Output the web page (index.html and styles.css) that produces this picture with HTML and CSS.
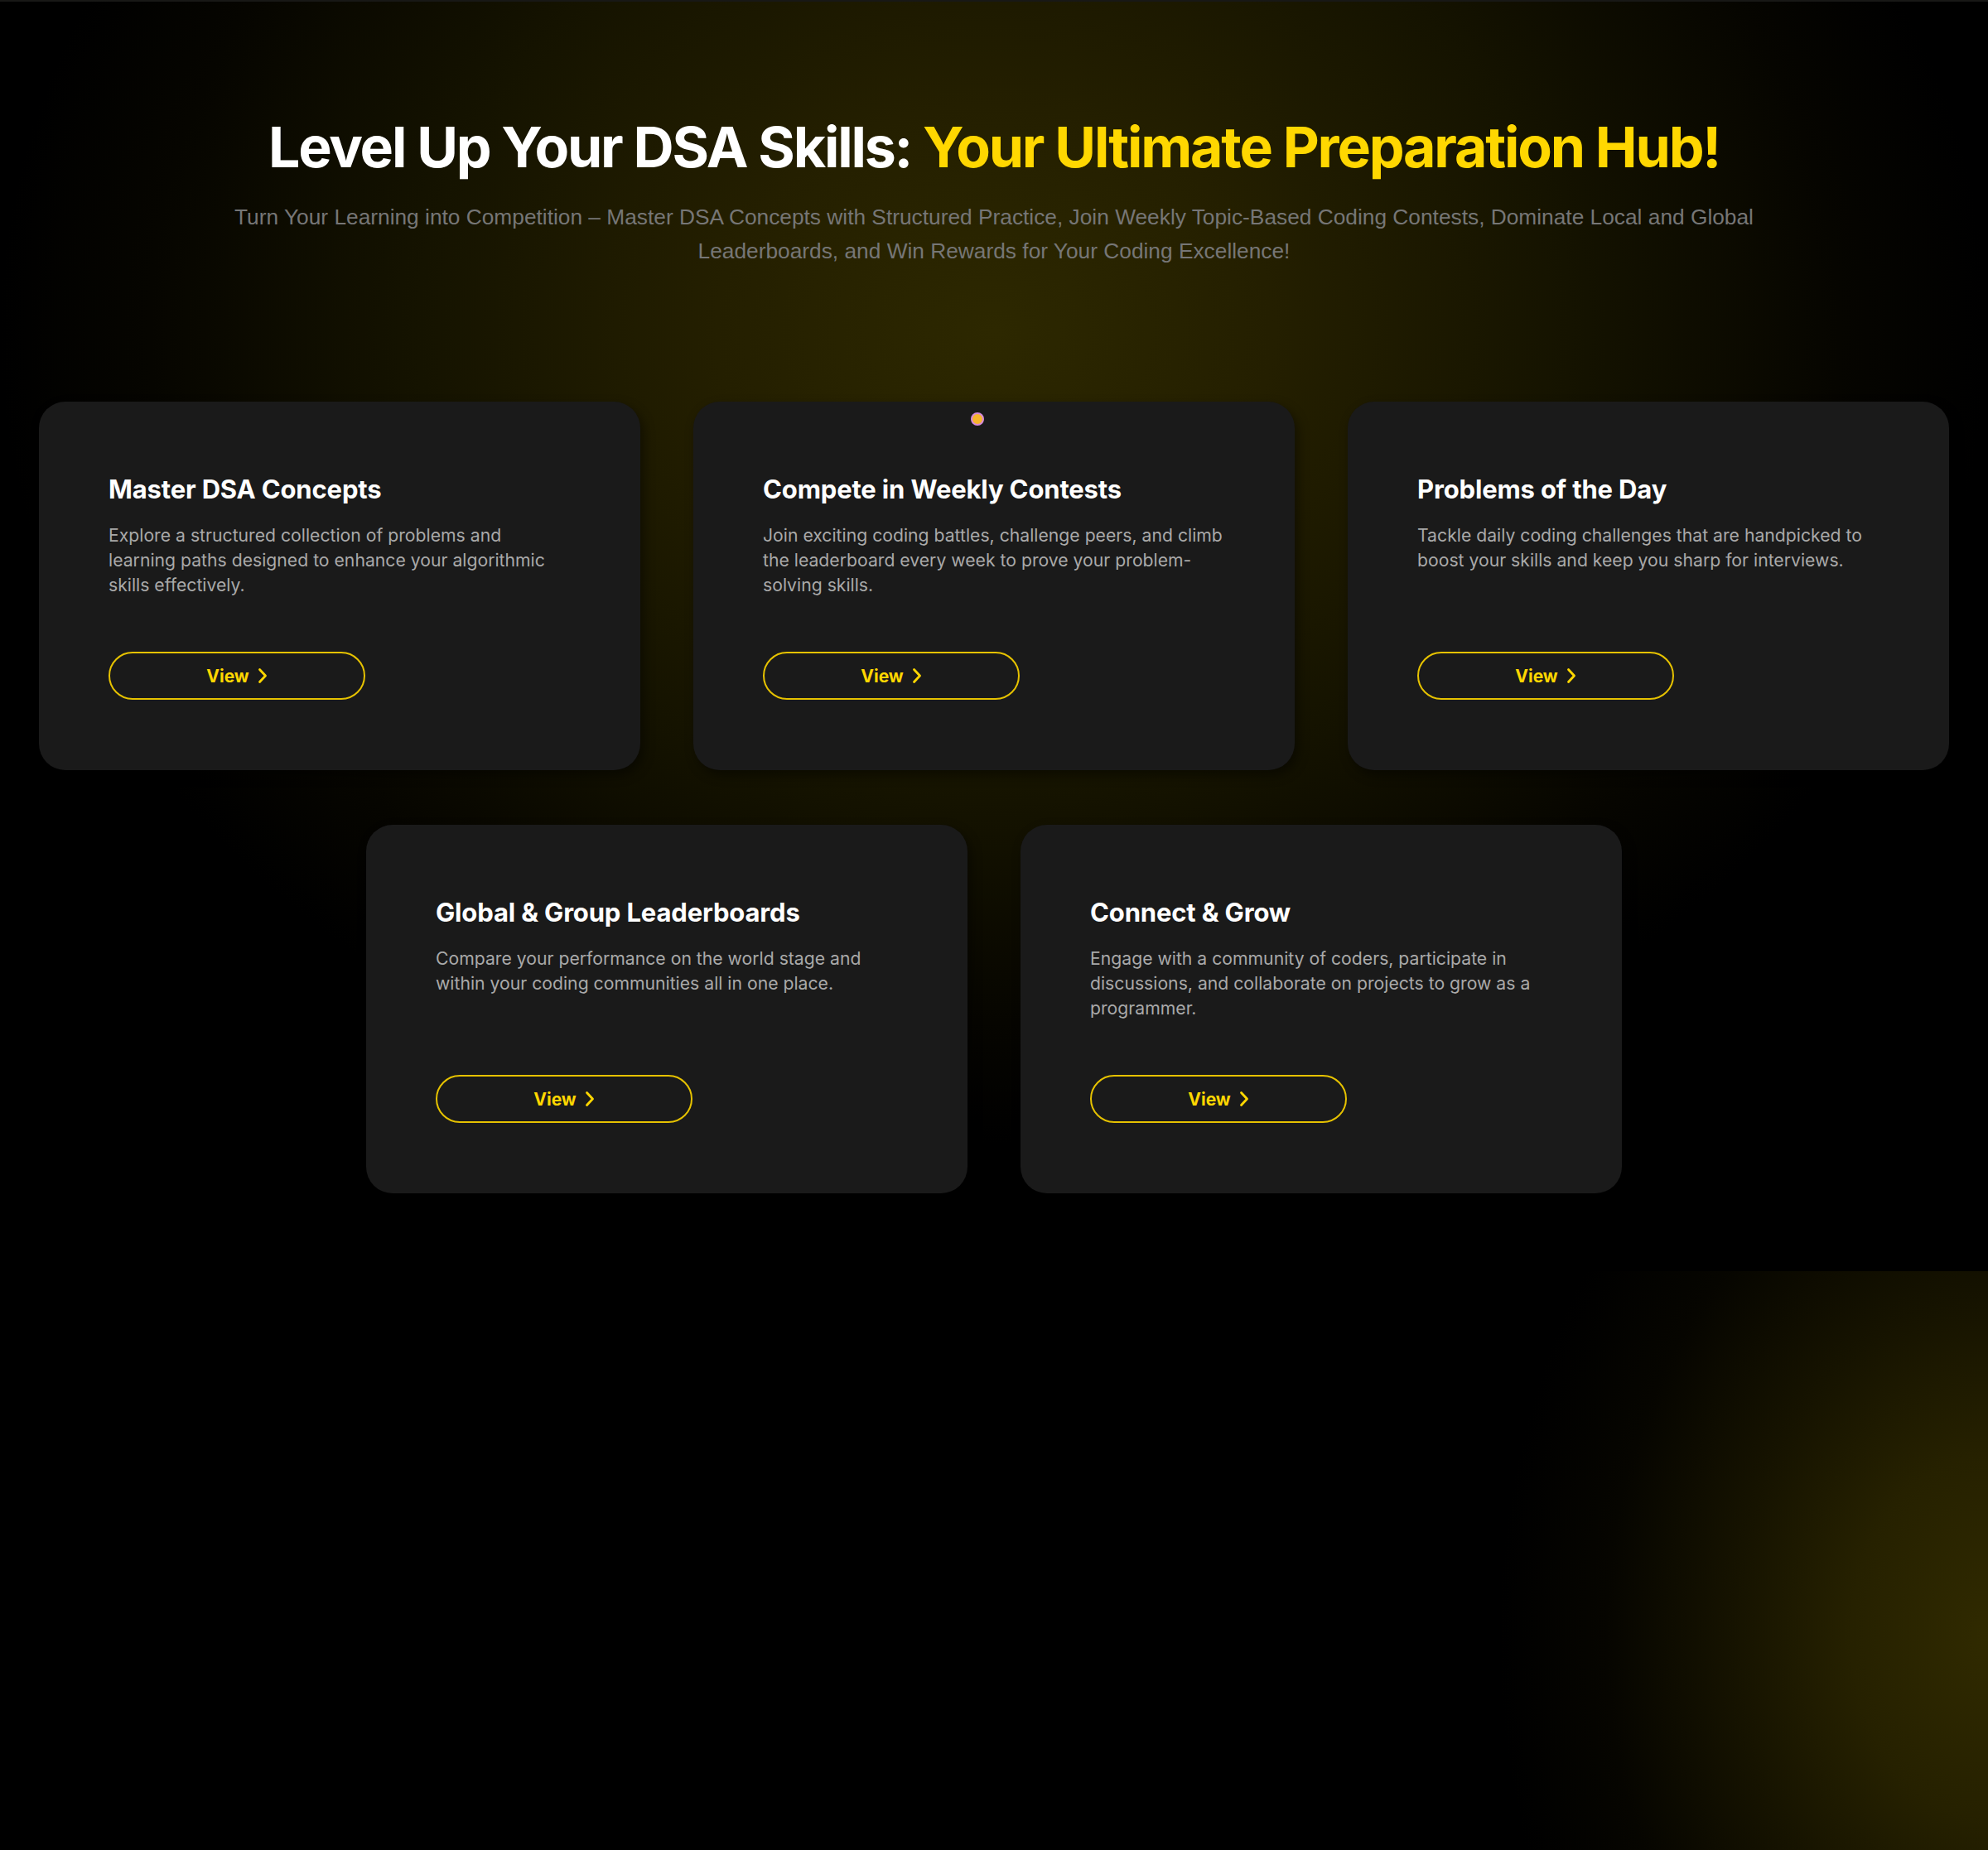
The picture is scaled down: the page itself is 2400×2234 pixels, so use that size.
FILE: index.html
```html
<!DOCTYPE html>
<html lang="en">
<head>
<meta charset="utf-8">
<title>Level Up Your DSA Skills</title>
<link rel="stylesheet" href="styles.css">
</head>
<body>
<section class="hero">
  <header class="intro">
    <h1 class="headline">Level Up Your DSA Skills: <span class="accent">Your Ultimate Preparation Hub!</span></h1>
    <p class="lead">Turn Your Learning into Competition – Master DSA Concepts with Structured Practice, Join Weekly Topic-Based Coding Contests, Dominate Local and Global Leaderboards, and Win Rewards for Your Coding Excellence!</p>
  </header>
  <div class="cards">
    <article class="card">
      <h3 class="card-title">Master DSA Concepts</h3>
      <p class="card-text">Explore a structured collection of problems and learning paths designed to enhance your algorithmic skills effectively.</p>
      <a class="view-btn" href="#">View <svg class="chev" viewBox="0 0 12 20" width="12" height="20"><path d="M2.5 2.5 L9.5 10 L2.5 17.5" fill="none" stroke="currentColor" stroke-width="2.8" stroke-linecap="round" stroke-linejoin="round"/></svg></a>
    </article>
    <article class="card">
      <span class="cursor-dot"></span>
      <h3 class="card-title">Compete in Weekly Contests</h3>
      <p class="card-text">Join exciting coding battles, challenge peers, and climb the leaderboard every week to prove your problem-solving skills.</p>
      <a class="view-btn" href="#">View <svg class="chev" viewBox="0 0 12 20" width="12" height="20"><path d="M2.5 2.5 L9.5 10 L2.5 17.5" fill="none" stroke="currentColor" stroke-width="2.8" stroke-linecap="round" stroke-linejoin="round"/></svg></a>
    </article>
    <article class="card">
      <h3 class="card-title">Problems of the Day</h3>
      <p class="card-text">Tackle daily coding challenges that are handpicked to boost your skills and keep you sharp for interviews.</p>
      <a class="view-btn" href="#">View <svg class="chev" viewBox="0 0 12 20" width="12" height="20"><path d="M2.5 2.5 L9.5 10 L2.5 17.5" fill="none" stroke="currentColor" stroke-width="2.8" stroke-linecap="round" stroke-linejoin="round"/></svg></a>
    </article>
    <article class="card">
      <h3 class="card-title">Global &amp; Group Leaderboards</h3>
      <p class="card-text">Compare your performance on the world stage and within your coding communities all in one place.</p>
      <a class="view-btn" href="#">View <svg class="chev" viewBox="0 0 12 20" width="12" height="20"><path d="M2.5 2.5 L9.5 10 L2.5 17.5" fill="none" stroke="currentColor" stroke-width="2.8" stroke-linecap="round" stroke-linejoin="round"/></svg></a>
    </article>
    <article class="card">
      <h3 class="card-title">Connect &amp; Grow</h3>
      <p class="card-text">Engage with a community of coders, participate in discussions, and collaborate on projects to grow as a programmer.</p>
      <a class="view-btn" href="#">View <svg class="chev" viewBox="0 0 12 20" width="12" height="20"><path d="M2.5 2.5 L9.5 10 L2.5 17.5" fill="none" stroke="currentColor" stroke-width="2.8" stroke-linecap="round" stroke-linejoin="round"/></svg></a>
    </article>
  </div>
</section>
<section class="below"></section>
</body>
</html>
```
FILE: styles.css
```css
* { box-sizing: border-box; }
html, body { margin: 0; padding: 0; }
body {
  background: #000;
  font-family: Inter, "DejaVu Sans", sans-serif;
  color: #fff;
}
.hero {
  height: 1535px;
  border-top: 2px solid #181816;
  padding: 0 47px;
  background:
    radial-gradient(ellipse 1200px 980px at 50% 26%, #2d2800 0%, #241f00 28%, #151300 58%, #060500 85%, #000 100%),
    #000;
}
.intro {
  max-width: 1920px;
  margin: 0 auto;
  padding-top: 134px;
  text-align: center;
}
.headline {
  margin: 0;
  font-family: Inter, sans-serif;
  font-weight: 700;
  font-size: 68px;
  line-height: 82px;
  letter-spacing: -0.032em;
  color: #fff;
}
.accent { color: #ffd700; }
.lead {
  margin: 24px auto 0;
  font-family: "Liberation Sans", Arial, sans-serif;
  font-size: 26.3px;
  line-height: 41px;
  color: #767676;
}
.cards {
  display: flex;
  flex-wrap: wrap;
  justify-content: center;
  column-gap: 64px;
  row-gap: 66px;
  margin-top: 161px;
}
.card {
  position: relative;
  width: 726px;
  min-height: 445px;
  background: #1a1a1a;
  border-radius: 32px;
  padding: 86px 84px 85px;
  display: flex;
  flex-direction: column;
  align-items: flex-start;
  box-shadow: 4px 6px 14px rgba(0, 0, 0, 0.45);
}
.card-title {
  margin: 0;
  font-size: 31px;
  line-height: 39px;
  font-weight: 700;
  letter-spacing: -0.005em;
  color: #fff;
}
.card-text {
  margin: 21px 0 0;
  font-size: 21.2px;
  line-height: 30px;
  color: #a9a9a9;
}
.view-btn {
  margin-top: auto;
  width: 310px;
  height: 58px;
  border: 2px solid #e6c200;
  border-radius: 29px;
  display: flex;
  align-items: center;
  justify-content: center;
  gap: 10px;
  color: #ffd700;
  font-size: 21px;
  font-weight: 700;
  text-decoration: none;
}
.chev { display: block; }
.cursor-dot {
  position: absolute;
  left: 335px;
  top: 13px;
  width: 16px;
  height: 16px;
  border-radius: 50%;
  background: #f7b52c;
  border: 2px solid #d58ad8;
}
.below {
  height: 699px;
  background:
    radial-gradient(ellipse 590px 780px at 100% 63%, #302a00 0%, #262100 28%, #161300 52%, #060500 78%, #000 100%),
    #000;
}
```
